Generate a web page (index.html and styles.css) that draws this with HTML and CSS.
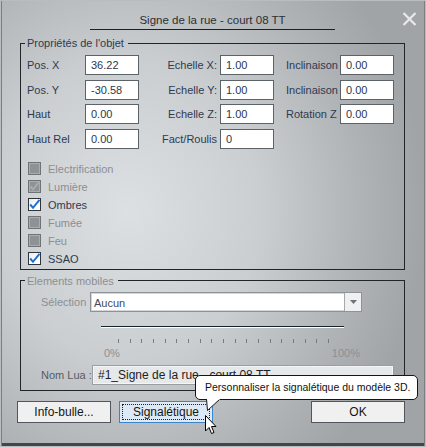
FILE: index.html
```html
<!DOCTYPE html>
<html lang="fr">
<head>
<meta charset="utf-8">
<title>Signe de la rue</title>
<link rel="stylesheet" href="styles.css">
</head>
<body>
<div class="window">
  <div class="titlebar">
    <div class="title">Signe de la rue - court 08 TT</div>
    <svg class="close" width="15" height="14" viewBox="0 0 15 14"><path d="M1.5 1 L13.5 13 M13.5 1 L1.5 13" stroke="#e7e9eb" stroke-width="2.2" fill="none"/></svg>
  </div>

  <fieldset class="group g1">
    <legend>Propriétés de l'objet</legend>
    <div class="g1-body">
      <div class="props">
        <span class="lbl">Pos. X</span><span class="field">36.22</span>
        <span class="lbl r">Echelle X:</span><span class="field">1.00</span>
        <span class="lbl l3">Inclinaison</span><span class="field">0.00</span>

        <span class="lbl">Pos. Y</span><span class="field">-30.58</span>
        <span class="lbl r">Echelle Y:</span><span class="field">1.00</span>
        <span class="lbl l3">Inclinaison</span><span class="field">0.00</span>

        <span class="lbl">Haut</span><span class="field">0.00</span>
        <span class="lbl r">Echelle Z:</span><span class="field">1.00</span>
        <span class="lbl l3">Rotation Z</span><span class="field">0.00</span>

        <span class="lbl">Haut Rel</span><span class="field">0.00</span>
        <span class="lbl r">Fact/Roulis</span><span class="field">0</span>
      </div>
      <ul class="checks">
        <li class="dis"><span class="cb"></span>Electrification</li>
        <li class="dis"><span class="cb"><svg class="tick" width="13" height="13" viewBox="0 0 13 13"><path d="M2.5 6.5 L5 9.5 L10.5 2.5" stroke="#a9acaf" stroke-width="2" fill="none"/></svg></span>Lumière</li>
        <li><span class="cb"><svg class="tick" width="13" height="13" viewBox="0 0 13 13"><path d="M2.2 6.5 L5 9.8 L11.5 1.8" stroke="#1f6fd2" stroke-width="2" fill="none"/></svg></span>Ombres</li>
        <li class="dis"><span class="cb"></span>Fumée</li>
        <li class="dis"><span class="cb"></span>Feu</li>
        <li><span class="cb"><svg class="tick" width="13" height="13" viewBox="0 0 13 13"><path d="M2.2 6.5 L5 9.8 L11.5 1.8" stroke="#1f6fd2" stroke-width="2" fill="none"/></svg></span>SSAO</li>
      </ul>
    </div>
  </fieldset>

  <fieldset class="group g2">
    <legend class="dim">Elements mobiles</legend>
    <div class="g2-body">
      <div class="row sel-row">
        <span class="lbl dim w-sel">Sélection</span>
        <div class="combo">
          <span class="combo-text">Aucun</span>
          <span class="combo-btn"><svg width="7" height="4" viewBox="0 0 7 4"><path d="M0 0 H7 L3.5 4 Z" fill="#6e7276"/></svg></span>
        </div>
      </div>
      <div class="slider">
        <div class="track"></div>
        <div class="ticks">
          <i></i><i></i><i></i><i></i><i></i><i></i><i></i><i></i><i></i><i></i>
          <i></i><i></i><i></i><i></i><i></i><i></i><i></i><i></i><i></i>
        </div>
        <div class="pct"><span>0%</span><span>100%</span></div>
      </div>
      <div class="row lua-row">
        <span class="lbl lua-lbl">Nom Lua :</span>
        <div class="lua-field">#1_Signe de la rue - court 08 TT</div>
      </div>
    </div>
  </fieldset>

  <div class="buttons">
    <button class="btn">Info-bulle...</button>
    <button class="btn focus"><span class="focus-ring">Signalétique</span></button>
    <button class="btn ok">OK</button>
  </div>

  <div class="tooltip">
    Personnaliser la signalétique du modèle 3D.
    <svg class="tail" width="16" height="13" viewBox="0 0 16 13"><path d="M0.5 0 L1.5 11.5 L14 0" fill="#fff" stroke="#151515" stroke-width="1"/><path d="M1 -1 L14 -1 L14 0.5 L1 0.5 Z" fill="#fff"/></svg>
  </div>

  <svg class="cursor" width="12" height="20" viewBox="0 0 12 20"><path d="M0.5 0.5 L0.5 16 L4 12.5 L6.5 18.5 L9 17.5 L6.5 11.5 L11 11.5 Z" fill="#fff" stroke="#000" stroke-width="1" stroke-linejoin="miter"/></svg>
</div>
</body>
</html>
```

FILE: styles.css
```css
* { box-sizing: border-box; }
html, body { margin: 0; padding: 0; }
body {
  font-family: "Liberation Sans", Arial, sans-serif;
  font-size: 11px;
  color: #2d3a50;
  background: #a5a8ab;
}
.window {
  position: relative;
  width: 426px;
  height: 447px;
  border: 1px solid #b9bcc0;
  box-shadow: inset 1px 0 0 #7b7f83, inset -1px 0 0 #7b7f83, inset 0 -3px 0 #41464b;
  background: radial-gradient(ellipse 70% 75% at 30% 47%, #dde0e3 0%, #cbced1 45%, #afb2b5 80%, #a1a4a7 100%);
  overflow: hidden;
}
.titlebar {
  display: flex;
  justify-content: space-between;
  align-items: flex-start;
  padding: 0 8px 0 89px;
  height: 29px;
}
.title {
  width: 245px;
  text-align: center;
  padding-top: 12px;
  line-height: 14px;
  height: 29px;
  border-bottom: 1px solid #1c2024;
  color: #2b2f35;
  font-size: 11.5px;
}
.close { margin-top: 11px; }

.group {
  margin: 6px 20px 0 19px;
  padding: 0;
  border: 1px solid #1f252b;
  min-width: 0;
}
.group legend {
  margin-left: 4px;
  padding: 0 4px 0 2px;
  line-height: 14px;
  color: #2d3a50;
}
.dim { color: #8b8f93 !important; }

.g1-body { padding: 5px 0 1px 6px; }
.props {
  display: grid;
  grid-template-columns: 58px 54px 81px 54px 66px 54px;
  grid-auto-rows: 20px;
  row-gap: 4.67px;
  align-items: center;
}
.lbl { white-space: nowrap; }
.lbl.r { text-align: right; padding-right: 3px; }
.lbl.l3 { padding-left: 12px; }
.field {
  height: 20px;
  background: #fff;
  border: 1px solid #5b6268;
  padding-left: 5px;
  line-height: 18px;
  color: #2a3950;
}

.checks {
  list-style: none;
  margin: 11px 0 0 1px;
  padding: 0;
}
.checks li {
  display: flex;
  align-items: center;
  height: 18px;
  gap: 7px;
  color: #2d3a50;
}
.checks li.dis { color: #8b8f93; }
.cb {
  position: relative;
  width: 13px;
  height: 13px;
  border: 1px solid #2f3439;
  background: linear-gradient(135deg, #e9ebee, #ffffff 60%);
}
.dis .cb {
  border-color: #707376;
  background: #8f9295;
  box-shadow: inset 0 0 0 1px #aaadb0;
}
.tick { position: absolute; left: -1px; top: -1px; }

.g2 { margin-top: 4px; }
.g2-body { padding: 4px 0 5px 20px; }
.row { display: flex; align-items: center; }
.w-sel { width: 49px; }
.combo {
  display: flex;
  width: 272px;
  height: 20px;
  border: 1px solid #8e9296;
  background: #fff;
}
.combo-text {
  flex: 1;
  padding-left: 2px;
  line-height: 18px;
  color: #404a5a;
  border: 1px solid #d4d7da;
  border-right: none;
}
.combo-btn {
  width: 17px;
  display: flex;
  align-items: center;
  justify-content: center;
  background: #eef0f2;
  border-left: 1px solid #a5a9ad;
}

.slider { padding-left: 60px; }
.track {
  margin-top: 14px;
  width: 243px;
  height: 2px;
  border-top: 1px solid #17232b;
  border-bottom: 1px solid #ffffff;
}
.ticks {
  display: flex;
  justify-content: space-between;
  width: 211px;
  margin: 11px 0 0 17px;
  height: 4px;
}
.ticks i { display: block; width: 1px; height: 4px; background: #777b7f; }
.pct {
  display: flex;
  justify-content: space-between;
  width: 256px;
  margin: 4px 0 0 3px;
  line-height: 13px;
  color: #8b8f93;
}

.lua-row { margin-top: 5px; }
.lua-lbl { width: 51px; color: #555b63; }
.lua-field {
  width: 302px;
  height: 20px;
  border: 1px solid #9a9ea2;
  background: #e6e8ea;
  box-shadow: inset 0 0 0 1px #f4f5f6;
  padding-left: 5px;
  line-height: 18px;
  color: #1c1f24;
  font-size: 12px;
}

.buttons {
  display: flex;
  gap: 8px;
  margin-top: 10px;
  padding: 0 20px 0 16px;
}
.btn {
  width: 94px;
  height: 22px;
  padding: 0;
  font-family: "Liberation Sans", Arial, sans-serif;
  font-size: 12px;
  color: #151515;
  background: #f0f0f0;
  border: 1px solid #50565c;
}
.btn.focus {
  background: #dde9f5;
  border-color: #3c84c8;
  padding: 2px;
}
.focus-ring {
  display: flex;
  align-items: center;
  justify-content: center;
  height: 100%;
  border: 1px dotted #202020;
}
.btn.ok { margin-left: auto; }

.tooltip {
  position: absolute;
  left: 194px;
  top: 374px;
  width: 223px;
  height: 25px;
  background: #fff;
  border: 1px solid #151515;
  border-radius: 5px;
  padding-left: 9px;
  line-height: 23px;
  font-size: 10.5px;
  color: #111;
  white-space: nowrap;
}
.tail { position: absolute; left: 10px; top: 23px; }
.cursor { position: absolute; left: 204px; top: 414px; }
```
